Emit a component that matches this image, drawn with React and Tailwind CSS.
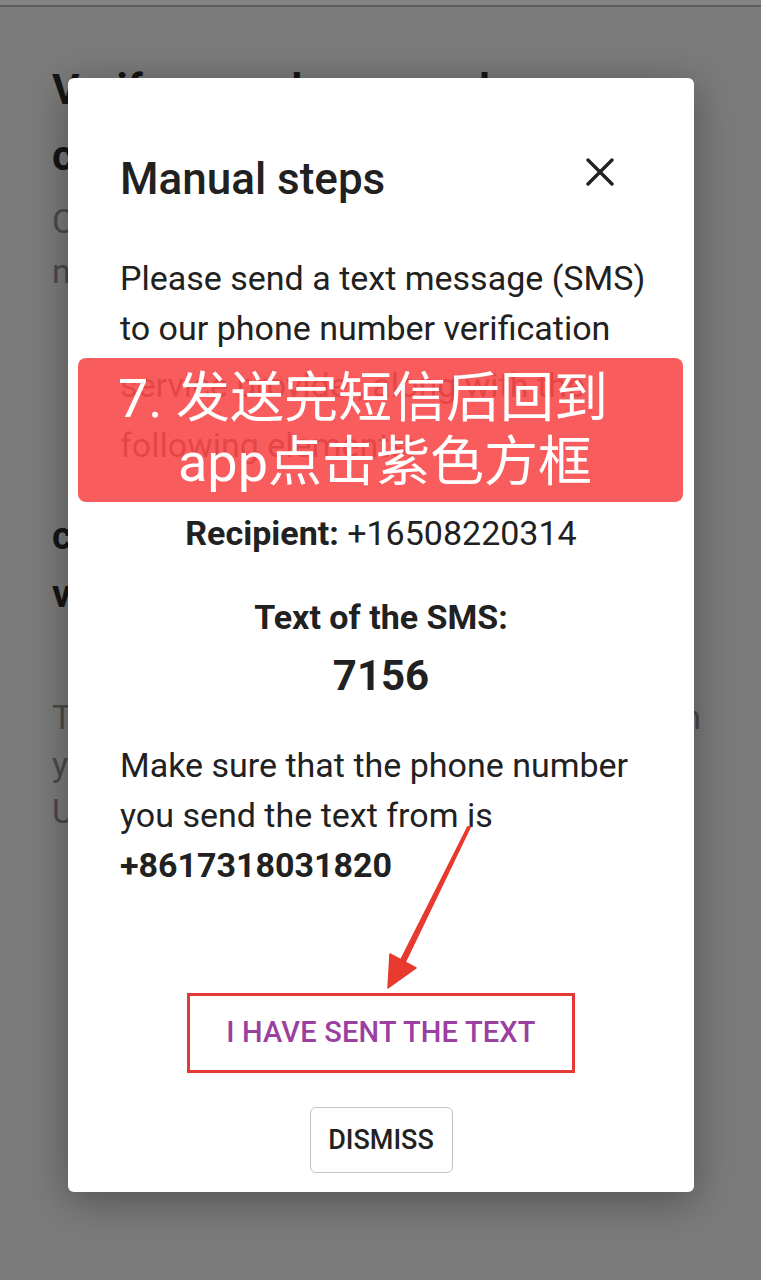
export default function App() {
  return (
    <div className="relative h-[1280px] w-full overflow-hidden bg-[#7b7b7b] font-[Roboto,'Noto_Sans_CJK_SC',sans-serif]">
      {/* page behind the dialog */}
      <div className="h-[7px] border-b-2 border-[#5c5c5c] bg-[#848484]" />
      <div className="whitespace-nowrap pl-[52px]">
        <h1 className="mt-[50px] text-[42px] font-bold leading-[66px] text-[#151515]">
          Verify your phone number
          <br />
          completely
        </h1>
        <p className="mt-[7px] text-[34px] leading-[50px] text-[#4a4a4a]">
          Choose how you would like to verify your
          <br />
          number in order to continue.
        </p>
        <h2 className="mt-[211px] text-[38px] font-bold leading-[58px] text-[#151515]">
          confirm your number
          <br />
          via text message
        </h2>
        <p className="mt-[71px] text-[34px] leading-[47px] text-[#4a4a4a]">
          The verification code will be sent again son
          <br />
          you will be redirected once it arrives.
          <br />
          Usually this takes a minute.
        </p>
      </div>

      {/* dialog */}
      <div className="absolute left-[68px] top-[78px] h-[1114px] w-[626px] rounded-[6px] bg-white shadow-[0_8px_40px_rgba(0,0,0,0.35)]">
        <div className="px-[52px] text-[#212121]">
          <div className="flex items-start justify-between pt-[75px]">
            <h2 className="text-[44px] font-medium leading-[52px]">Manual steps</h2>
            <svg className="mr-[28px] mt-[5px]" width="28" height="28" viewBox="0 0 28 28">
              <path d="M2 2L26 26M26 2L2 26" stroke="#222" strokeWidth="3.4" strokeLinecap="round" />
            </svg>
          </div>

          <div className="mt-[48px] whitespace-nowrap text-[34px] leading-[50px]">
            <div>Please send a text message (SMS)</div>
            <div>to our phone number verification</div>
            <div className="mt-[7px]">service provider, along with the</div>
            <div className="mt-[10px]">following elements:</div>
          </div>

          <p className="mt-[38px] text-center text-[34px] leading-[50px]">
            <span className="font-bold">Recipient:</span> +16508220314
          </p>
          <p className="mt-[34px] text-center text-[34px] font-bold leading-[50px]">Text of the SMS:</p>
          <p className="mt-[9px] text-center text-[42px] font-bold leading-[50px]">7156</p>

          <div className="mt-[39px] whitespace-nowrap text-[34px] leading-[50px]">
            <div>Make sure that the phone number</div>
            <div>you send the text from is</div>
            <div className="font-bold">+8617318031820</div>
          </div>

          <div className="flex flex-col items-center">
            <div className="mt-[103px] flex h-[80px] w-[388px] items-center justify-center border-[3px] border-[#e53935]">
              <span className="text-[29px] font-medium tracking-[0.2px] text-[#9b3fa0]">I HAVE SENT THE TEXT</span>
            </div>
            <button className="mt-[34px] flex h-[66px] w-[143px] items-center justify-center rounded-[6px] border-[1.5px] border-[#c4c4c4] text-[27px] font-medium text-[#222]">
              DISMISS
            </button>
          </div>
        </div>
      </div>

      {/* annotation banner */}
      <div className="absolute left-[78px] top-[358px] h-[144px] w-[605px] rounded-[8px] bg-[#f84a4a]/90 pt-[9px] text-[54px] leading-[64px] text-white">
        <div className="pl-[40px]">7. 发送完短信后回到</div>
        <div className="pl-[100px]">app点击紫色方框</div>
      </div>

      {/* annotation arrow */}
      <svg className="pointer-events-none absolute left-0 top-0" width="761" height="1280" viewBox="0 0 761 1280">
        <path d="M470 827L468 827L400 962L404 964Z" fill="#e8392f" stroke="#e8392f" strokeWidth="2" strokeLinejoin="round" />
        <path d="M388 988L390 954L416 968Z" fill="#e8392f" stroke="#e8392f" strokeWidth="1.5" strokeLinejoin="round" />
      </svg>
    </div>
  );
}
